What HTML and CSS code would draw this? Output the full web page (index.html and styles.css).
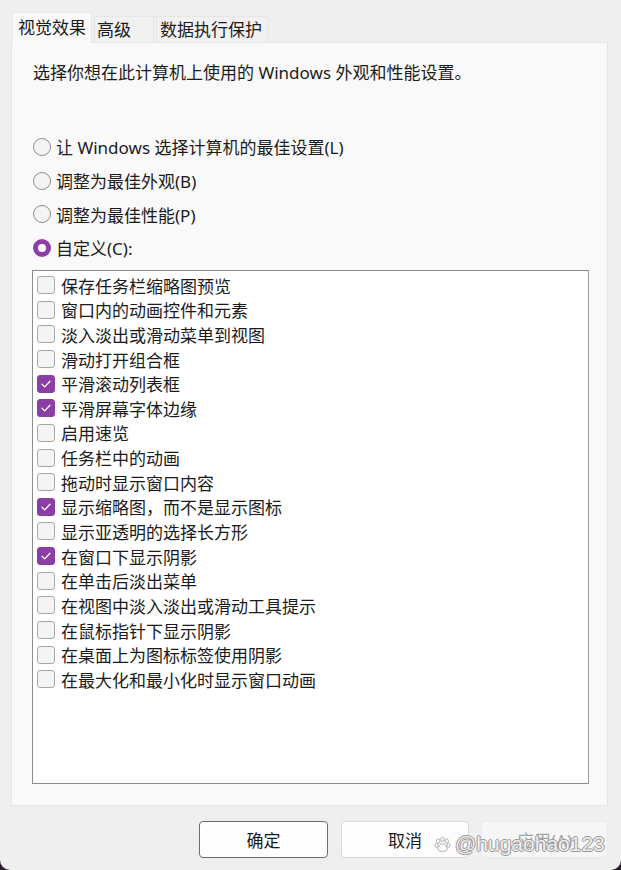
FILE: index.html
```html
<!DOCTYPE html>
<html lang="zh-CN">
<head>
<meta charset="utf-8">
<title>性能选项</title>
<link rel="stylesheet" href="styles.css">
</head>
<body>
<div class="window">
  <div class="tabs">
    <div class="tab active">视觉效果</div>
    <div class="tab">高级</div>
    <div class="tab wide">数据执行保护</div>
  </div>
  <div class="panel">
    <p class="desc">选择你想在此计算机上使用的 Windows 外观和性能设置。</p>
    <div class="radios">
      <label class="radio"><span class="dot"></span>让 Windows 选择计算机的最佳设置(L)</label>
      <label class="radio"><span class="dot"></span>调整为最佳外观(B)</label>
      <label class="radio"><span class="dot"></span>调整为最佳性能(P)</label>
      <label class="radio on"><span class="dot"></span>自定义(C):</label>
    </div>
    <div class="list">
      <div class="item"><span class="box"></span>保存任务栏缩略图预览</div>
      <div class="item"><span class="box"></span>窗口内的动画控件和元素</div>
      <div class="item"><span class="box"></span>淡入淡出或滑动菜单到视图</div>
      <div class="item"><span class="box"></span>滑动打开组合框</div>
      <div class="item checked"><span class="box"><svg viewBox="0 0 18 18"><path d="M4.5 9.3l3 3 6-6.4"/></svg></span>平滑滚动列表框</div>
      <div class="item checked"><span class="box"><svg viewBox="0 0 18 18"><path d="M4.5 9.3l3 3 6-6.4"/></svg></span>平滑屏幕字体边缘</div>
      <div class="item"><span class="box"></span>启用速览</div>
      <div class="item"><span class="box"></span>任务栏中的动画</div>
      <div class="item"><span class="box"></span>拖动时显示窗口内容</div>
      <div class="item checked"><span class="box"><svg viewBox="0 0 18 18"><path d="M4.5 9.3l3 3 6-6.4"/></svg></span>显示缩略图，而不是显示图标</div>
      <div class="item"><span class="box"></span>显示亚透明的选择长方形</div>
      <div class="item checked"><span class="box"><svg viewBox="0 0 18 18"><path d="M4.5 9.3l3 3 6-6.4"/></svg></span>在窗口下显示阴影</div>
      <div class="item"><span class="box"></span>在单击后淡出菜单</div>
      <div class="item"><span class="box"></span>在视图中淡入淡出或滑动工具提示</div>
      <div class="item"><span class="box"></span>在鼠标指针下显示阴影</div>
      <div class="item"><span class="box"></span>在桌面上为图标标签使用阴影</div>
      <div class="item"><span class="box"></span>在最大化和最小化时显示窗口动画</div>
    </div>
  </div>
  <div class="buttons">
    <button class="btn primary">确定</button>
    <button class="btn cancel">取消</button>
    <button class="btn disabled">应用(A)</button>
  </div>
  <div class="watermark"><svg class="paw" viewBox="0 0 20 20"><ellipse cx="5" cy="6" rx="2" ry="2.6"/><ellipse cx="10" cy="4" rx="2" ry="2.6"/><ellipse cx="15" cy="6" rx="2" ry="2.6"/><ellipse cx="3" cy="11" rx="1.8" ry="2.2"/><ellipse cx="17" cy="11" rx="1.8" ry="2.2"/><path d="M10 9c-3 0-5.5 4-5.5 6.5 0 2 2 2.5 5.5 2.5s5.5-.5 5.5-2.5C15.5 13 13 9 10 9z"/></svg>@hugaohao123</div>
</div>
</body>
</html>
```
FILE: styles.css
```css
html, body {
  margin: 0;
  padding: 0;
}
body {
  width: 621px;
  height: 870px;
  background: #2b1f2b;
  font-family: "Noto Sans", "Noto Sans CJK SC", sans-serif;
  color: #1b1b1b;
  overflow: hidden;
}
.window {
  position: relative;
  width: 621px;
  height: 870px;
  background: #efefef;
  border-radius: 0 0 10px 10px;
  box-sizing: border-box;
  padding: 12px 13px 0 11px;
}
.tabs {
  display: flex;
  align-items: flex-end;
  height: 30px;
  padding-left: 1px;
}
.tab {
  box-sizing: border-box;
  height: 26px;
  width: 60px;
  margin-right: 2px;
  padding-left: 2px;
  font-size: 17px;
  line-height: 26px;
  background: #f1f1f1;
  border: 1px solid #e6e6e6;
  border-bottom: none;
  white-space: nowrap;
}
.tab.active {
  height: 31px;
  width: 80px;
  margin-bottom: -1px;
  padding-left: 5px;
  line-height: 29px;
  background: #f9f9f9;
  border-color: #e9e9e9;
  position: relative;
  z-index: 1;
}
.tab.wide {
  width: 112px;
  margin-left: 0;
  padding-left: 3px;
}
.panel {
  box-sizing: border-box;
  height: 764px;
  background: #f9f9f9;
  border: 1px solid #e6e6e6;
  padding: 18px 0 0 21px;
}
.desc {
  margin: 0;
  font-size: 17px;
  line-height: 24px;
}
.radios {
  margin-top: 45px;
  display: flex;
  flex-direction: column;
}
.radio {
  display: flex;
  align-items: center;
  height: 33.7px;
  font-size: 17px;
}
.dot {
  box-sizing: border-box;
  width: 18px;
  height: 18px;
  border-radius: 50%;
  border: 1px solid #8d8d8d;
  background: #f4f4f4;
  margin-right: 5px;
  flex: none;
}
.radio.on .dot {
  border: 5.5px solid #8a3ea6;
  background: #ffffff;
}
.list {
  box-sizing: border-box;
  margin-top: 5px;
  width: 557px;
  height: 514px;
  margin-left: -1px;
  background: #ffffff;
  border: 1px solid #8c8c8c;
  border-right-color: #9a9a9a;
  padding: 2px 0 0 4px;
}
.item {
  display: flex;
  align-items: center;
  height: 24.65px;
  font-size: 17px;
  white-space: nowrap;
}
.box {
  box-sizing: border-box;
  width: 18px;
  height: 18px;
  border-radius: 3px;
  border: 1px solid #a8a8a8;
  background: #f4f4f4;
  margin-right: 6px;
  flex: none;
  display: flex;
}
.item.checked .box {
  border-color: #8a3ea6;
  background: #8a3ea6;
}
.box svg {
  width: 16px;
  height: 16px;
}
.box path {
  fill: none;
  stroke: #ffffff;
  stroke-width: 1.4;
  stroke-linecap: round;
  stroke-linejoin: round;
}
.buttons {
  display: flex;
  justify-content: flex-end;
  margin-top: 15px;
}
.btn {
  box-sizing: border-box;
  width: 129px;
  height: 37px;
  border-radius: 4px;
  border: 1px solid #d8d8d8;
  background: #fdfdfd;
  font-family: "Noto Sans", "Noto Sans CJK SC", sans-serif;
  font-size: 17px;
  color: #1b1b1b;
  padding: 0;
  margin-left: 13px;
}
.btn.primary {
  border: 1px solid #6f6878;
  background: #fefefe;
  margin-left: 0;
}
.btn.cancel {
  width: 128px;
}
.btn.disabled {
  color: #a3a3a3;
  background: #f6f6f6;
  border-color: #ebebeb;
  width: 127px;
  margin-left: 12px;
}
.watermark {
  position: absolute;
  left: 434px;
  top: 832px;
  display: flex;
  align-items: center;
  font-family: "Liberation Sans", sans-serif;
  font-size: 21px;
  color: rgba(255, 255, 255, 0.85);
  text-shadow: -1px 0 #9a9a9a, 1px 0 #9a9a9a, 0 -1px #9a9a9a, 0 1px #9a9a9a;
  white-space: nowrap;
}
.paw {
  width: 17px;
  height: 17px;
  margin-right: 4px;
  fill: #ffffff;
  stroke: #a0a0a0;
  stroke-width: 1;
}
```
